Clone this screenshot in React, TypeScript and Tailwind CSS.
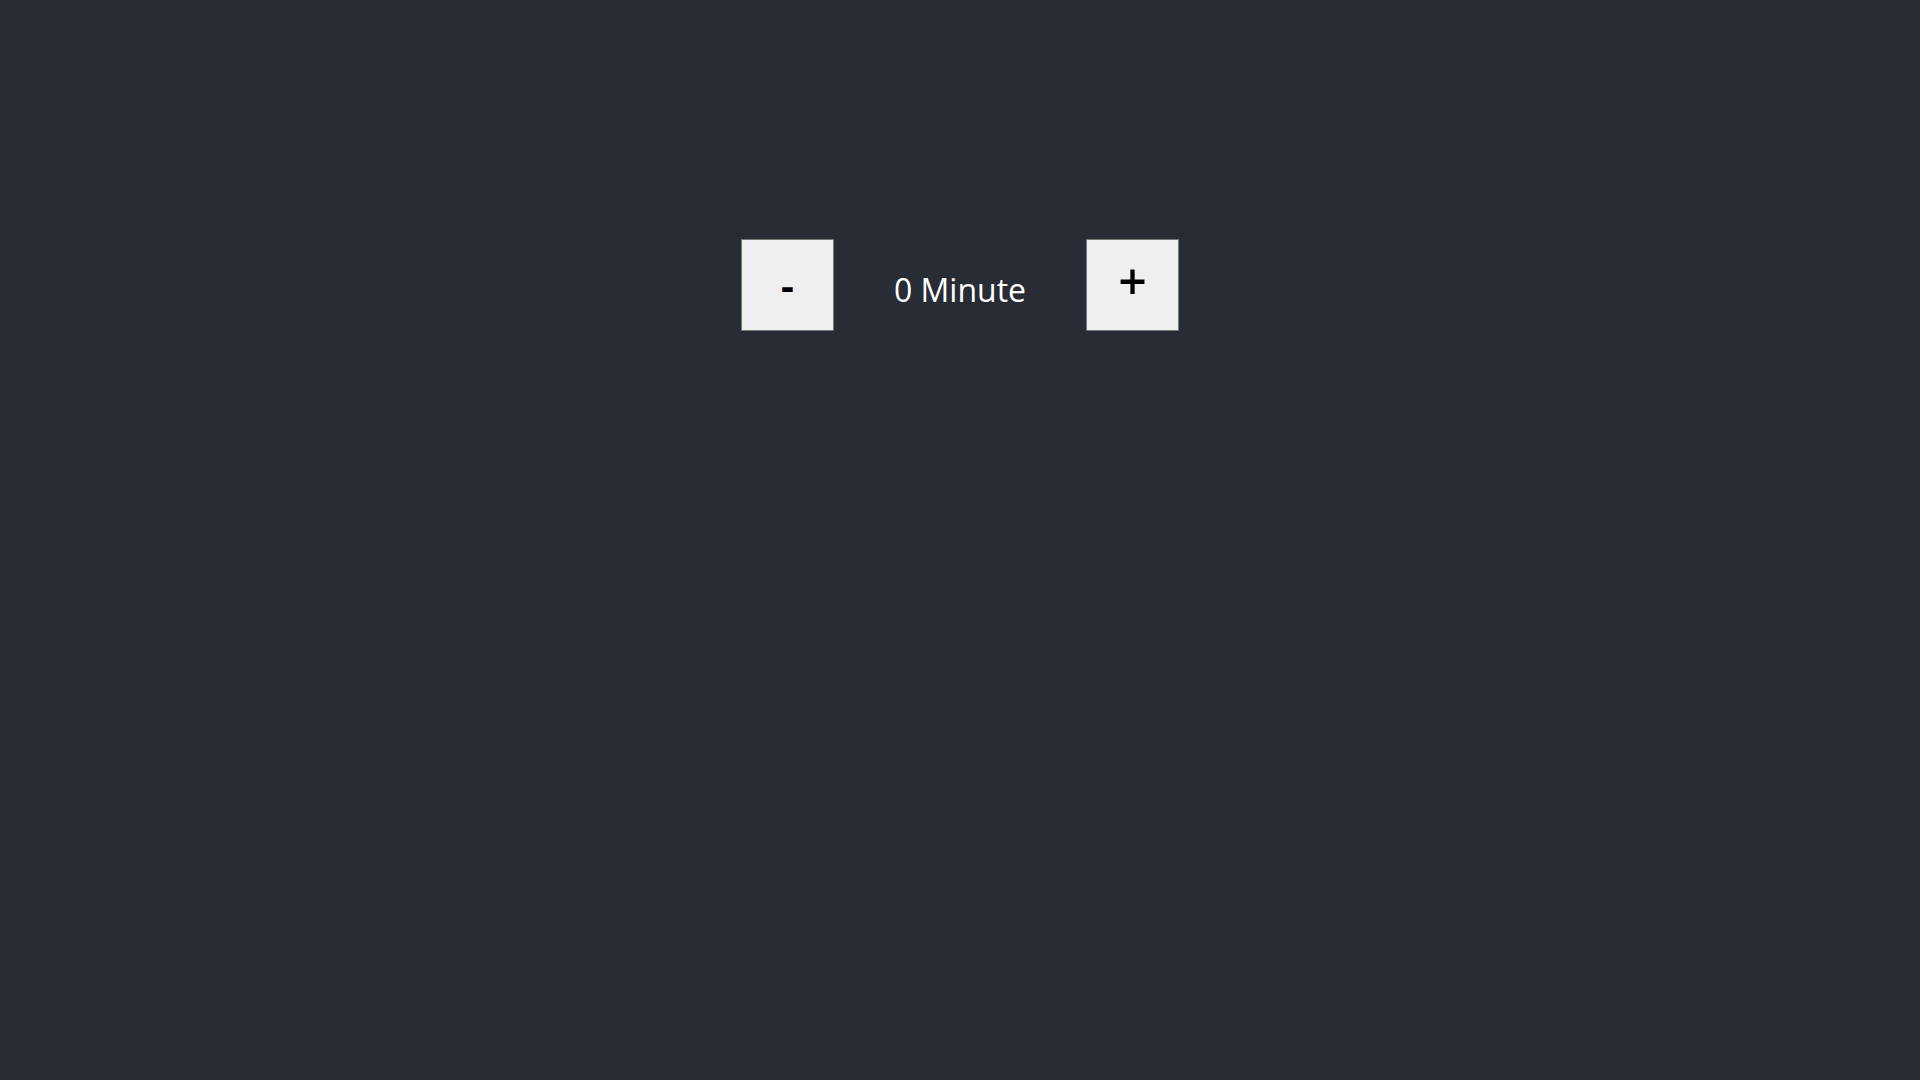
export default function App() {
  return (
    <div className="min-h-screen w-full bg-[#282c34] pt-[239px] font-['Open_Sans',sans-serif]">
      <div className="flex items-center justify-center gap-[60px]">
        <button className="w-[93px] h-[92px] bg-[#efefef] border border-[#767676] text-black text-[40px] font-bold leading-none flex items-center justify-center">
          -
        </button>
        <span className="text-white text-[32px] leading-none pt-[10px]">0 Minute</span>
        <button className="w-[93px] h-[92px] bg-[#efefef] border border-[#767676] text-black text-[50px] font-semibold leading-none flex items-center justify-center pb-[8px]">
          +
        </button>
      </div>
    </div>
  );
}
